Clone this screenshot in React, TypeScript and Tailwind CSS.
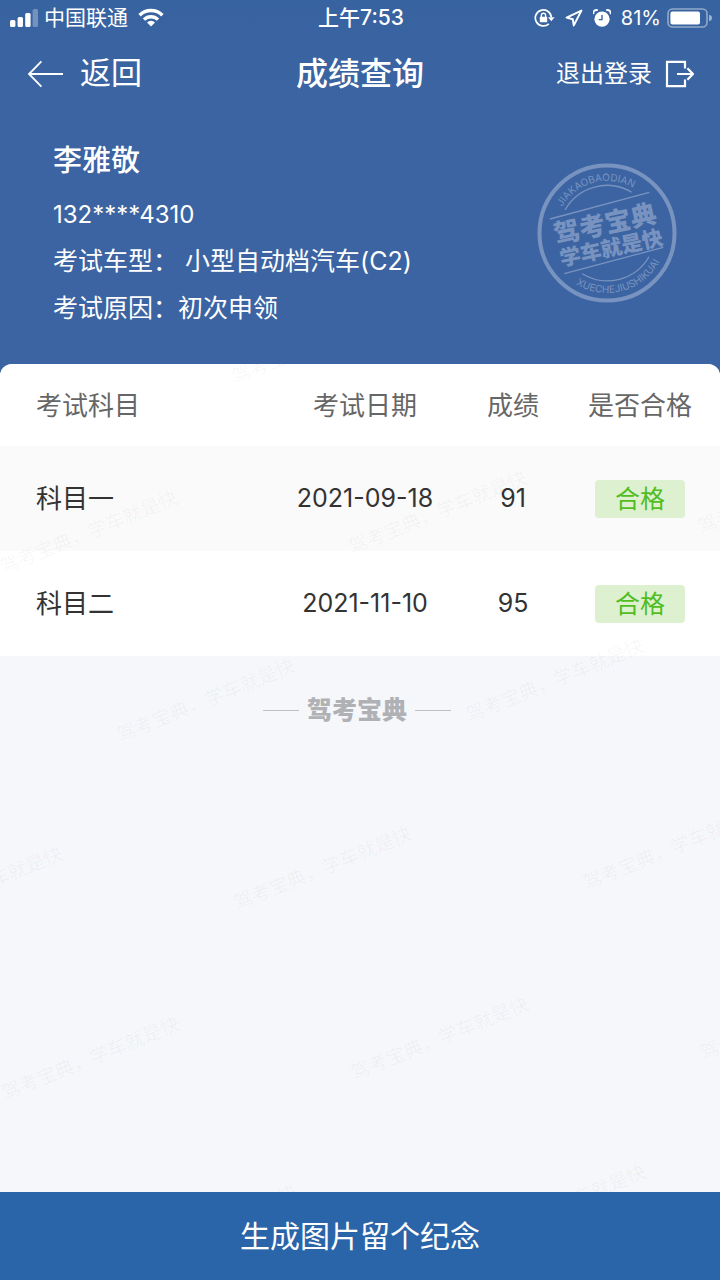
import React from "react";

type Result = {
  subject: string;
  date: string;
  score: number;
  status: string;
};

const results: Result[] = [
  { subject: "科目一", date: "2021-09-18", score: 91, status: "合格" },
  { subject: "科目二", date: "2021-11-10", score: 95, status: "合格" },
];

// start points of the repeated watermark, relative to the sheet
const watermarks = [
  [235, 20],
  [3, 210],
  [352, 190],
  [701, 170],
  [120, 378],
  [469, 358],
  [-112, 566],
  [237, 546],
  [586, 526],
  [5, 736],
  [354, 716],
  [703, 696],
  [122, 904],
  [471, 884],
];

const StatusBar = () => {
  return (
    <div className="grid h-9 grid-cols-[1fr_auto_1fr] items-center pr-2 pl-2.5 text-xl">
      <div className="flex items-center gap-1.5">
        <svg width="28" height="18" viewBox="0 0 28 18" fill="currentColor">
          <rect x="0" y="11" width="5.4" height="7" rx="1.5" />
          <rect x="7.6" y="8" width="5.4" height="10" rx="1.5" />
          <rect x="15.2" y="4" width="5.4" height="14" rx="1.5" />
          <rect x="22.6" y="0" width="5.4" height="18" rx="1.5" opacity="0.3" />
        </svg>
        <span className="text-[21px]">中国联通</span>
        <svg
          className="ml-1"
          width="26"
          height="19"
          viewBox="0 0 26 19"
          fill="none"
          stroke="currentColor"
          strokeWidth="3.4"
        >
          <path d="M1.6 7.2a16.2 16.2 0 0 1 22.8 0" />
          <path d="M6 11.6a10 10 0 0 1 14 0" />
          <path d="M13 18.6l-4-4.2a5.6 5.6 0 0 1 8 0z" fill="currentColor" stroke="none" />
        </svg>
      </div>
      <span className="text-[21px] font-medium">上午7:53</span>
      <div className="flex items-center justify-end">
        <svg width="21" height="20" viewBox="0 0 21 20" fill="none" stroke="currentColor" strokeWidth="1.7">
          <path d="M14.8 15.8a8 8 0 1 1 2.5-6.6" />
          <path d="M14 9.2h6.6l-3.3 4z" fill="currentColor" stroke="none" />
          <rect x="5.8" y="8.8" width="7.4" height="5.4" rx="0.6" fill="currentColor" stroke="none" />
          <path d="M7.4 9V7.4a2.1 2.1 0 0 1 4.2 0V9" strokeWidth="1.4" />
        </svg>
        <svg
          className="ml-2.5"
          width="18"
          height="18"
          viewBox="0 0 18 18"
          fill="none"
          stroke="currentColor"
          strokeWidth="2"
          strokeLinejoin="round"
        >
          <path d="M16.4 1.6L1.6 8.6l6.2 1.6 1 6.2z" />
        </svg>
        <svg className="ml-2.5" width="18" height="19" viewBox="0 0 18 19" fill="none">
          <circle cx="9" cy="10.2" r="7.6" fill="currentColor" />
          <path d="M9 6v4.6H5.8" stroke="#3763a0" strokeWidth="1.4" />
          <path d="M0.6 5.2a3 3 0 0 1 4.2-3.8M17.4 5.2a3 3 0 0 0-4.2-3.8" stroke="currentColor" strokeWidth="1.9" />
        </svg>
        <span className="ml-2.5">81%</span>
        <svg className="ml-1.5" width="45" height="20" viewBox="0 0 45 20" fill="none">
          <rect x="1" y="1" width="39" height="18" rx="4.5" stroke="currentColor" strokeWidth="1.6" opacity="0.45" />
          <rect x="3.4" y="3.6" width="29.6" height="12.8" rx="2" fill="currentColor" />
          <path d="M42 7a3 3 0 0 1 0 6z" fill="currentColor" opacity="0.5" />
        </svg>
      </div>
    </div>
  );
};

const NavBar = () => {
  return (
    <nav className="grid h-[75px] grid-cols-[1fr_auto_1fr] items-center px-[26px]">
      <button className="flex cursor-pointer items-center gap-4 text-[31px]">
        <svg width="38" height="28" viewBox="0 0 38 28" fill="none" stroke="currentColor" strokeWidth="1.8">
          <path d="M37 14H3.4M15.4 1.4L3 14l12.4 12.6" />
        </svg>
        返回
      </button>
      <h1 className="text-[32px] font-medium">成绩查询</h1>
      <button className="flex cursor-pointer items-center gap-3 justify-self-end text-2xl">
        退出登录
        <svg width="30" height="28" viewBox="0 0 30 28" fill="none" stroke="currentColor" strokeWidth="2.2">
          <path d="M21 8.4V1.8H3v24.4h18v-6.6" />
          <path d="M13 14h16M23.4 8.2L29 14l-5.6 5.8" />
        </svg>
      </button>
    </nav>
  );
};

const Stamp = () => {
  return (
    <svg className="size-[140px] text-[#7893c0]" viewBox="0 0 140 140" fill="none" stroke="currentColor">
      <defs>
        <path id="stampTop" d="M19.8 56.5A52 52 0 0 1 106.8 33.2" />
        <path id="stampBottom" d="M27.6 112.4A60 60 0 0 0 128 85.5" />
      </defs>
      <circle cx="70" cy="70" r="67.5" strokeWidth="4" />
      <path d="M28 47A48 48 0 0 1 94.7 29.3" strokeWidth="1.3" />
      <path d="M45.3 110.7A48 48 0 0 0 112 93.7" strokeWidth="1.3" />
      <path d="M13 56L112.3 29.4M27.3 110.7L126.3 84.3" strokeWidth="1.3" />
      <g fill="currentColor" stroke="none" textAnchor="middle">
        <g transform="rotate(-12 70 70)" className="font-black">
          <text x="70" y="70" fontSize="26">
            驾考宝典
          </text>
          <text x="71" y="93" fontSize="21">
            学车就是快
          </text>
        </g>
        <g fontSize="10">
          <text>
            <textPath href="#stampTop" startOffset="50%">
              JIAKAOBAODIAN
            </textPath>
          </text>
          <text>
            <textPath href="#stampBottom" startOffset="50%">
              XUECHEJIUSHIKUAI
            </textPath>
          </text>
        </g>
      </g>
    </svg>
  );
};

const Watermark = () => {
  return (
    <svg className="pointer-events-none absolute inset-0 h-full w-full" aria-hidden="true">
      <g fontSize="19" className="fill-black/4">
        {watermarks.map(([x, y]) => (
          <text key={`${x}-${y}`} transform={`translate(${x} ${y}) rotate(-22)`}>
            驾考宝典，学车就是快
          </text>
        ))}
      </g>
    </svg>
  );
};

const App = () => {
  return (
    <div className="flex min-h-screen flex-col bg-[#3c64a2] font-['Inter','Noto_Sans_CJK_SC',sans-serif] text-white">
      <header className="bg-linear-to-b from-[#3763a0] to-[#3c64a2]">
        <StatusBar />
        <NavBar />
      </header>

      {/* candidate */}
      <section className="flex items-start justify-between pt-[26px] pr-[43px] pb-8 pl-[53px]">
        <div className="text-[25px] leading-[47px]">
          <h2 className="mb-[7px] text-[29px] leading-[47px] font-medium">李雅敬</h2>
          <p className="text-2xl leading-[47px]">132****4310</p>
          <p>考试车型： 小型自动档汽车(C2)</p>
          <p>考试原因：初次申领</p>
        </div>
        <div className="pt-[26px]">
          <Stamp />
        </div>
      </section>

      {/* results */}
      <main className="relative flex-1 overflow-hidden rounded-t-xl bg-[#f5f7fb]">
        <table className="w-full table-fixed text-center text-[26px] text-[#333333]">
          <thead className="bg-white text-[#666666]">
            <tr className="h-[82px]">
              <th className="pl-9 text-left font-normal">考试科目</th>
              <th className="w-[154px] font-normal">考试日期</th>
              <th className="w-[142px] font-normal">成绩</th>
              <th className="w-[136px] pr-6 font-normal whitespace-nowrap">是否合格</th>
            </tr>
          </thead>
          <tbody>
            {results.map((item) => (
              <tr key={item.subject} className="h-[105px] bg-white odd:bg-[#fafafa]">
                <td className="pl-9 text-left">{item.subject}</td>
                <td className="text-[25px]">{item.date}</td>
                <td className="text-[25px]">{item.score}</td>
                <td className="pr-6">
                  <span className="inline-block rounded-sm bg-[#ddf1d0] px-5 text-[25px] leading-[38px] text-[#52bd1f]">
                    {item.status}
                  </span>
                </td>
              </tr>
            ))}
          </tbody>
        </table>
        <div className="flex items-center justify-center gap-2 pt-9 pr-1.5 text-[#b0b1b5]">
          <span className="h-px w-9 bg-[#bfc0c4]"></span>
          <span className="text-[25px] font-black">驾考宝典</span>
          <span className="h-px w-9 bg-[#bfc0c4]"></span>
        </div>
        <Watermark />
      </main>

      <button className="h-[88px] w-full cursor-pointer bg-[#2b65a9] text-3xl">生成图片留个纪念</button>
    </div>
  );
};

export default App;
